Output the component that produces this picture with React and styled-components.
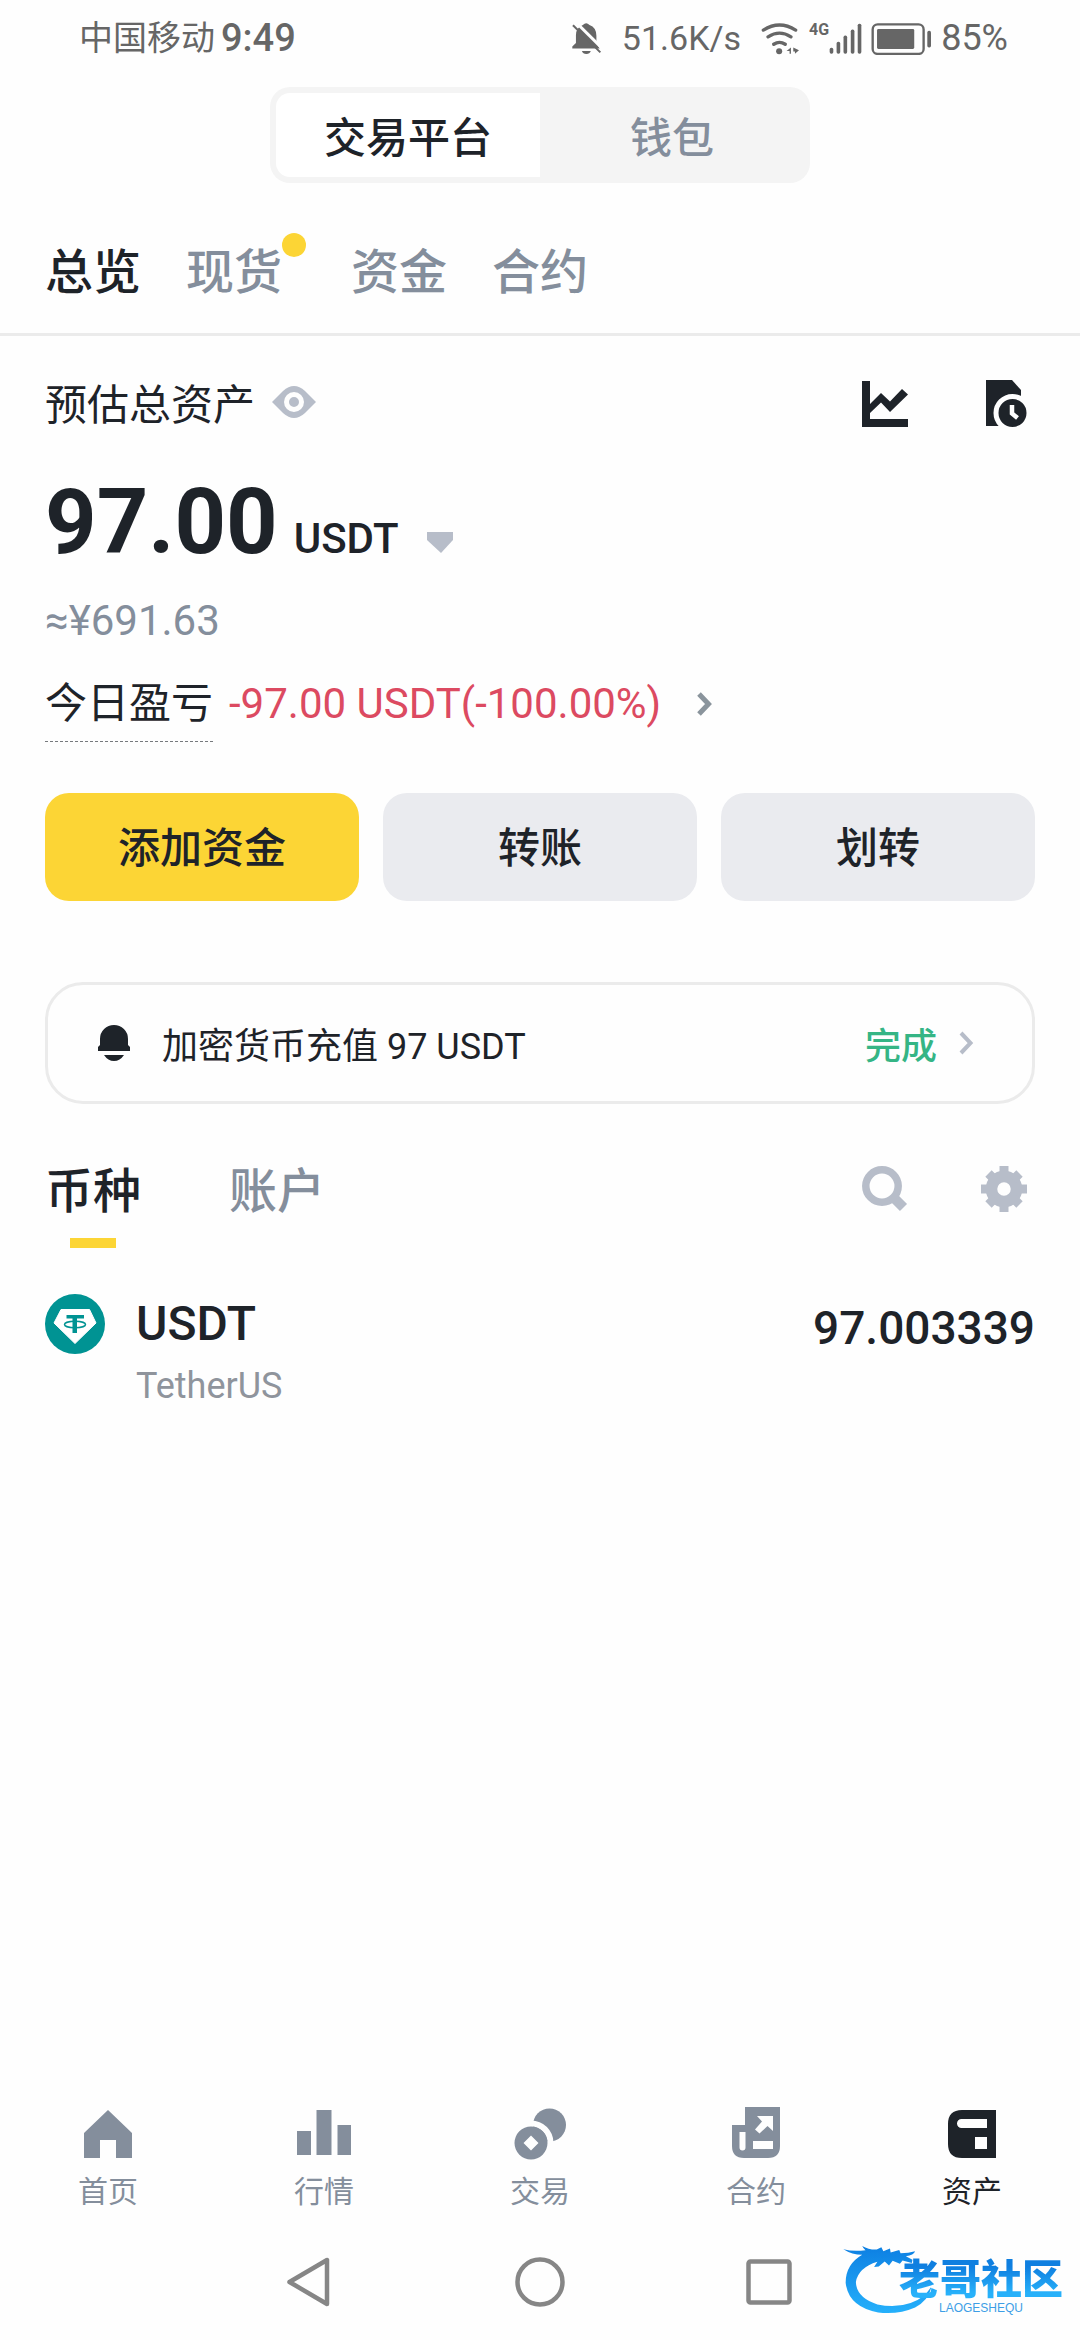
import React from 'react';
import styled, { createGlobalStyle } from 'styled-components';

const color = {
  ink: '#1e2329',
  mute: '#848e9c',
  icon: '#b7bdc9',
  yellow: '#fcd535',
  line: '#ebebeb',
  status: '#666666',
};

const GlobalStyle = createGlobalStyle`
  * { box-sizing: border-box; }
  body {
    margin: 0;
    background: #fefefe;
    color: ${color.ink};
    font-family: Roboto, "Noto Sans CJK SC", sans-serif;
  }
  button {
    margin: 0;
    padding: 0;
    border: 0;
    background: none;
    color: inherit;
    font: inherit;
    cursor: pointer;
  }
  a { color: inherit; text-decoration: none; }
  svg { display: block; flex: none; }
`;

const Page = styled.div`
  min-height: 100vh;
  display: flex;
  flex-direction: column;
`;

/* Status bar */
const StatusBar = styled.header`
  height: 76px;
  padding: 0 72px 0 79px;
  display: flex;
  align-items: center;
  justify-content: space-between;
  color: ${color.status};
`;
const StatusGroup = styled.div`
  display: flex;
  align-items: center;
  gap: ${(p) => p.$gap}px;
`;
const StatusText = styled.span`
  font-size: ${(p) => p.$size}px;
  font-weight: ${(p) => p.$weight || 400};
  line-height: 44px;
`;
const NetworkType = styled.span`
  align-self: flex-start;
  font-size: 16px;
  font-weight: 700;
  line-height: 16px;
`;
const Signal = styled.div`
  display: flex;
  align-items: center;
`;

/* Platform switch */
const Segmented = styled.div`
  align-self: center;
  width: 50%;
  height: 96px;
  margin-top: 11px;
  padding: 6px;
  display: grid;
  grid-template-columns: 1fr 1fr;
  border-radius: 20px;
  background: #f4f4f4;
`;
const Segment = styled.button`
  && {
    padding-top: 8px;
    border-radius: 14px 0 0 14px;
    background: ${(p) => (p.$active ? '#ffffff' : 'transparent')};
    color: ${(p) => (p.$active ? color.ink : color.mute)};
    font-size: 42px;
    font-weight: 500;
    line-height: 60px;
  }
`;

/* Section tabs */
const Tabs = styled.nav`
  display: flex;
  gap: 45px;
  padding: 60px 45px 30px;
  border-bottom: 3px solid ${color.line};
`;
const Tab = styled.button`
  && {
    position: relative;
    padding-right: ${(p) => (p.$dot ? 24 : 0)}px;
    color: ${(p) => (p.$active ? color.ink : color.mute)};
    font-size: 48px;
    font-weight: 500;
    line-height: 60px;
  }
`;
const Dot = styled.span`
  position: absolute;
  top: -10px;
  right: 0;
  width: 24px;
  height: 24px;
  border-radius: 50%;
  background: ${color.yellow};
`;

const Content = styled.main`
  padding: 40px 45px 0;
`;

/* Balance */
const SummaryHead = styled.div`
  display: flex;
  align-items: flex-start;
  justify-content: space-between;
`;
const SummaryTitle = styled.div`
  display: flex;
  align-items: center;
  gap: 16px;
  font-size: 42px;
  line-height: 60px;
`;
const EyeButton = styled.button`
  && {
    padding-bottom: 8px;
  }
`;
const IconActions = styled.div`
  display: flex;
  align-items: center;
  gap: ${(p) => p.$gap}px;
  padding-top: 4px;
  padding-right: 8px;
`;
const Balance = styled.div`
  display: flex;
  align-items: baseline;
  margin-top: 37px;
`;
const BalanceValue = styled.strong`
  font-size: 90px;
  font-weight: 700;
  line-height: 100px;
`;
const UnitButton = styled.button`
  && {
    display: flex;
    align-items: baseline;
    gap: 28px;
    margin-left: 16px;
    font-size: 42px;
    font-weight: 500;
    line-height: 60px;
  }
`;
const FiatValue = styled.div`
  margin-top: 18px;
  color: ${color.mute};
  font-size: 42px;
  line-height: 60px;
`;
const ProfitRow = styled.div`
  display: flex;
  align-items: flex-start;
  gap: 16px;
  margin-top: 23px;
  font-size: 42px;
  line-height: 60px;
`;
const ProfitLabel = styled.span`
  padding-bottom: 7px;
  border-bottom: 1px dashed #76797d;
`;
const ProfitLink = styled.a`
  display: flex;
  align-items: center;
  gap: 36px;
  color: #dc4a61;
`;

/* Actions */
const Actions = styled.div`
  display: grid;
  grid-template-columns: repeat(3, 1fr);
  gap: 24px;
  margin-top: 51px;
`;
const Action = styled.button`
  && {
    height: 108px;
    padding-top: 4px;
    border-radius: 24px;
    background: ${(p) => (p.$primary ? color.yellow : '#eaebef')};
    font-size: 42px;
    font-weight: 500;
    line-height: 60px;
  }
`;

/* Notice */
const Notice = styled.a`
  height: 122px;
  margin-top: 81px;
  padding: 0 58px 0 50px;
  display: flex;
  align-items: center;
  border: 3px solid ${color.line};
  border-radius: 38px;
`;
const NoticeText = styled.span`
  flex: 1;
  margin-left: 32px;
  padding-top: 8px;
  font-size: 36px;
  line-height: 48px;
`;
const NoticeState = styled.span`
  margin-right: 22px;
  padding-top: 8px;
  color: #35b585;
  font-size: 36px;
  font-weight: 500;
  line-height: 48px;
`;

/* Asset list */
const ListHead = styled.div`
  display: flex;
  align-items: flex-start;
  justify-content: space-between;
  margin-top: 58px;
`;
const ListTabs = styled.div`
  display: flex;
  gap: 88px;
`;
const ListTab = styled.button`
  && {
    display: flex;
    flex-direction: column;
    align-items: center;
    gap: 16px;
    color: ${(p) => (p.$active ? color.ink : color.mute)};
    font-size: 48px;
    font-weight: 500;
    line-height: 60px;
  }
`;
const Underline = styled.span`
  width: 46px;
  height: 10px;
  background: ${color.yellow};
`;
const AssetRow = styled.div`
  display: flex;
  align-items: flex-start;
  margin-top: 46px;
`;
const AssetName = styled.div`
  flex: 1;
  display: flex;
  flex-direction: column;
  gap: 8px;
  margin-left: 31px;
`;
const Symbol = styled.span`
  font-size: 48px;
  font-weight: 500;
  line-height: 60px;
`;
const FullName = styled.span`
  color: #8f949c;
  font-size: 36px;
  line-height: 48px;
`;
const AssetAmount = styled.span`
  font-size: 46px;
  font-weight: 500;
  line-height: 68px;
`;

/* Bottom */
const Footer = styled.footer`
  position: relative;
  margin-top: auto;
`;
const BottomNav = styled.nav`
  display: grid;
  grid-template-columns: repeat(5, 1fr);
  padding-bottom: 14px;
`;
const NavItem = styled.a`
  display: flex;
  flex-direction: column;
  align-items: center;
  gap: 12px;
  color: ${(p) => (p.$active ? color.ink : color.mute)};
  font-size: 30px;
  line-height: 36px;
`;
const SystemBar = styled.div`
  height: 116px;
  display: flex;
  align-items: center;
  justify-content: center;
  gap: 170px;
  color: #868686;
`;
const Watermark = styled.div`
  position: absolute;
  right: 17px;
  bottom: 26px;
  display: flex;
  align-items: flex-start;
`;
const WatermarkText = styled.div`
  display: flex;
  flex-direction: column;
  align-items: center;
  margin-left: -32px;
  padding-top: 14px;
`;
const WatermarkName = styled.span`
  background: linear-gradient(#0f7fe0 20%, #27b1fa 80%);
  background-clip: text;
  color: transparent;
  font-size: 41px;
  font-weight: 900;
  line-height: 44px;
`;
const WatermarkLatin = styled.span`
  color: #3d9ee6;
  font-family: "Liberation Sans", Arial, sans-serif;
  font-size: 12px;
  line-height: 12px;
`;

/* Icons */
const BellOff = () => (
  <svg width="31" height="33" viewBox="30 28 92 100" fill="currentColor">
    <path d="M65 37Q75 27 85 37Q106 44 106 70V93L116 108H33V102L44 92V68Q44 45 65 37z" />
    <path d="M62 116h27q-3 9-13.500 9t-13.500-9z" />
    <path d="M43 28L128 112" stroke="#fefefe" strokeWidth="9" />
    <path d="M35 38L118 120" stroke="currentColor" strokeWidth="6" />
  </svg>
);
const Wifi = () => (
  <svg width="39" height="33" viewBox="606 28 116 98" fill="none" stroke="currentColor" strokeWidth="10" strokeLinecap="round">
    <path d="M613 52Q661 22 709 52M627 72Q661 50 695 72M644 94Q661 83 678 94" />
    <circle cx="660" cy="115" r="9" fill="currentColor" stroke="none" />
    <path d="M682 114L695 104V122H691V114zM702 104L719 112L707 122V116H702z" fill="currentColor" stroke="none" />
  </svg>
);
const SignalBars = () => (
  <svg width="33" height="33" viewBox="793 28 100 98" fill="currentColor">
    <rect x="795" y="105" width="11" height="18" rx="5" />
    <rect x="816" y="87" width="11" height="36" rx="5" />
    <rect x="837" y="68" width="11" height="55" rx="5" />
    <rect x="859" y="50" width="11" height="73" rx="5" />
    <rect x="880" y="32" width="11" height="91" rx="5" />
  </svg>
);
const Battery = () => (
  <svg width="61" height="33" viewBox="928 28 182 98" fill="currentColor">
    <rect x="933" y="35" width="152" height="88" rx="15" fill="none" stroke="currentColor" strokeWidth="7" />
    <rect x="946" y="49" width="111" height="59" rx="4" />
    <rect x="1096" y="54" width="11" height="50" rx="5" />
  </svg>
);
const Eye = () => (
  <svg width="46" height="34" viewBox="-1 -1 46 34">
    <path d="M0 16L11 5Q22-5 33 5L44 16L33 27Q22 37 11 27z" fill={color.icon} />
    <circle cx="22" cy="16" r="7.500" fill={color.icon} stroke="#fefefe" strokeWidth="5" />
  </svg>
);
const Chart = () => (
  <svg width="46" height="46" viewBox="0 0 46 46" fill="currentColor">
    <path d="M0 0H8V23L19 12L28 20.500L40 8L46 13.500L28 31L19 21.500L8 32V38H46V46H0z" />
  </svg>
);
const History = () => (
  <svg width="41" height="47" viewBox="0 0 41 47" fill="currentColor">
    <path d="M0 0H26L35 10V46H0z" />
    <circle cx="26.500" cy="33" r="16.500" fill="currentColor" stroke="#fefefe" strokeWidth="5" />
    <path d="M26 25V33.500L31.500 38" fill="none" stroke="#fefefe" strokeWidth="4.500" />
  </svg>
);
const Caret = () => (
  <svg width="26" height="21" viewBox="0 0 26 21">
    <path d="M0 0H26V8L14 21L0 8z" fill={color.icon} />
  </svg>
);
const Chevron = ({ tone, width }) => (
  <svg width="15" height="24" viewBox="0 0 15 24" fill="none" stroke={tone} strokeWidth={width}>
    <path d="M2 2L11.500 12L2 22" />
  </svg>
);
const Bell = () => (
  <svg width="32" height="36" viewBox="0 0 32 36" fill="currentColor">
    <path d="M2 14a14 14 0 0 1 28 0V20L32 22V26H0V22L2 20zM6 30H26Q22 36 16 36T6 30z" />
  </svg>
);
const Search = () => (
  <svg width="46" height="46" viewBox="0 0 46 46" fill="none" stroke={color.icon}>
    <circle cx="20" cy="20" r="16.200" strokeWidth="7.500" />
    <path d="M31 31L41.500 41.500" strokeWidth="10" />
  </svg>
);
const Gear = () => (
  <svg width="46" height="46" viewBox="-23 -23 46 46" fill="none" stroke={color.icon}>
    <circle r="12.500" strokeWidth="11.500" />
    <path
      d="M0-23V-12M0 23V12M-23 0H-12M23 0H12M-15.500-15.500L-9-9M15.500 15.500L9 9M-15.500 15.500L-9 9M15.500-15.500L9-9"
      strokeWidth="9"
    />
  </svg>
);
const Tether = () => (
  <svg width="60" height="60" viewBox="0 0 60 60">
    <circle cx="30" cy="30" r="30" fill="#009393" />
    <path d="M16 15.500H44.500L51 29L30 49.500L9 29z" fill="#fff" stroke="#fff" strokeLinejoin="round" />
    <path d="M21.500 21H39V24.500H32V39H27.500V24.500H21.500z" fill="#009393" />
    <ellipse cx="30" cy="30.500" rx="10.500" ry="3.200" fill="none" stroke="#009393" strokeWidth="1.500" />
  </svg>
);
const NavIcon = ({ children }) => (
  <svg width="60" height="60" viewBox="0 0 60 60" fill="currentColor" fillRule="evenodd">
    {children}
  </svg>
);

const navItems = [
  { label: '首页', icon: <path d="M30 8L54 31V56H38V38H22V56H6V31z" /> },
  { label: '行情', icon: <path d="M3 29H17V53H3zM22.500 8H37.500V53H22.500zM43.500 23H57V53H43.500z" /> },
  {
    label: '交易',
    icon: (
      <>
        <circle cx="39.500" cy="23" r="16.500" />
        <circle cx="21" cy="41" r="19.500" fill="none" stroke="#fefefe" strokeWidth="6" />
        <path d="M21 24.500a16.500 16.500 0 1 1 0 33a16.500 16.500 0 1 1 0-33zM21 33.500L13.500 41L21 48.500L28.500 41z" />
      </>
    ),
  },
  {
    label: '合约',
    icon: (
      <path d="M19 5H54V44Q54 56 42 56H18Q6 56 6 44V23H19zM31 14L36 19.500L29 27.500L33.500 31.500L41.500 24L47 29V14zM13.500 30V45.500a3 3 0 0 0 6 0V30zM27 39V47H47V39z" />
    ),
  },
  {
    label: '资产',
    active: true,
    icon: <path d="M20 8H54V56H20Q6 56 6 42V22Q6 8 20 8zM19.500 17a4.500 4.500 0 0 0 0 9H45V17zM33 35V47H45V35z" />,
  },
];

const Dragon = () => (
  <svg width="88" height="70" viewBox="64 72 266 208" fill="url(#dragon)">
    <defs>
      <linearGradient id="dragon" x1="0" y1="0" x2="0" y2="1">
        <stop offset="0" stopColor="#0d7fe2" />
        <stop offset="1" stopColor="#25b0fb" />
      </linearGradient>
    </defs>
    <path d="M65 86Q95 94 132 89Q126 84 122 76Q142 88 166 87L180 80L186 92L206 84L208 96L234 88L238 98Q262 98 282 92Q278 104 254 107L274 118L272 128L244 120L236 130L214 121L203 135L190 123L172 138L158 140L168 124Q110 142 103 185Q104 232 168 253Q254 270 312 224L331 200Q324 240 282 262Q232 284 170 277Q80 260 72 187Q72 132 122 103Q92 103 65 86z" />
  </svg>
);

export default function App() {
  return (
    <Page>
      <GlobalStyle />
      <StatusBar>
        <StatusGroup $gap={6}>
          <StatusText $size={34}>中国移动</StatusText>
          <StatusText $size={38} $weight={500}>9:49</StatusText>
        </StatusGroup>
        <StatusGroup $gap={20}>
          <BellOff />
          <StatusText $size={34}>51.6K/s</StatusText>
          <StatusGroup $gap={9}>
            <Wifi />
            <Signal>
              <NetworkType>4G</NetworkType>
              <SignalBars />
            </Signal>
            <Battery />
            <StatusText $size={36}>85%</StatusText>
          </StatusGroup>
        </StatusGroup>
      </StatusBar>

      <Segmented>
        <Segment type="button" $active>交易平台</Segment>
        <Segment type="button">钱包</Segment>
      </Segmented>

      <Tabs>
        <Tab type="button" $active>总览</Tab>
        <Tab type="button" $dot>现货<Dot /></Tab>
        <Tab type="button">资金</Tab>
        <Tab type="button">合约</Tab>
      </Tabs>

      <Content>
        <SummaryHead>
          <SummaryTitle>
            预估总资产
            <EyeButton type="button" aria-label="隐藏资产"><Eye /></EyeButton>
          </SummaryTitle>
          <IconActions $gap={78}>
            <button type="button" aria-label="走势"><Chart /></button>
            <button type="button" aria-label="历史记录"><History /></button>
          </IconActions>
        </SummaryHead>
        <Balance>
          <BalanceValue>97.00</BalanceValue>
          <UnitButton type="button">USDT<Caret /></UnitButton>
        </Balance>
        <FiatValue>≈¥691.63</FiatValue>
        <ProfitRow>
          <ProfitLabel>今日盈亏</ProfitLabel>
          <ProfitLink href="#profit">
            -97.00 USDT(-100.00%)
            <Chevron tone="#8a949c" width={5} />
          </ProfitLink>
        </ProfitRow>

        <Actions>
          <Action type="button" $primary>添加资金</Action>
          <Action type="button">转账</Action>
          <Action type="button">划转</Action>
        </Actions>

        <Notice href="#deposit">
          <Bell />
          <NoticeText>加密货币充值 97 USDT</NoticeText>
          <NoticeState>完成</NoticeState>
          <Chevron tone={color.icon} width={4} />
        </Notice>

        <ListHead>
          <ListTabs>
            <ListTab type="button" $active>币种<Underline /></ListTab>
            <ListTab type="button">账户</ListTab>
          </ListTabs>
          <IconActions $gap={73}>
            <button type="button" aria-label="搜索"><Search /></button>
            <button type="button" aria-label="设置"><Gear /></button>
          </IconActions>
        </ListHead>
        <AssetRow>
          <Tether />
          <AssetName>
            <Symbol>USDT</Symbol>
            <FullName>TetherUS</FullName>
          </AssetName>
          <AssetAmount>97.003339</AssetAmount>
        </AssetRow>
      </Content>

      <Footer>
        <BottomNav>
          {navItems.map((item) => (
            <NavItem key={item.label} href={`#${item.label}`} $active={item.active}>
              <NavIcon>{item.icon}</NavIcon>
              {item.label}
            </NavItem>
          ))}
        </BottomNav>
        <SystemBar>
          <button type="button" aria-label="返回">
            <svg width="60" height="60" viewBox="0 0 60 60" fill="none" stroke="currentColor" strokeWidth="4.500" strokeLinejoin="round">
              <path d="M9.500 30L47 8V52z" />
            </svg>
          </button>
          <button type="button" aria-label="主屏幕">
            <svg width="60" height="60" viewBox="0 0 60 60" fill="none" stroke="currentColor" strokeWidth="4.500">
              <circle cx="30" cy="30" r="22.500" />
            </svg>
          </button>
          <button type="button" aria-label="最近任务">
            <svg width="60" height="60" viewBox="0 0 60 60" fill="none" stroke="currentColor" strokeWidth="4.500">
              <rect x="8.500" y="9.500" width="41" height="41" rx="2" />
            </svg>
          </button>
        </SystemBar>
        <Watermark>
          <Dragon />
          <WatermarkText>
            <WatermarkName>老哥社区</WatermarkName>
            <WatermarkLatin>LAOGESHEQU</WatermarkLatin>
          </WatermarkText>
        </Watermark>
      </Footer>
    </Page>
  );
}
